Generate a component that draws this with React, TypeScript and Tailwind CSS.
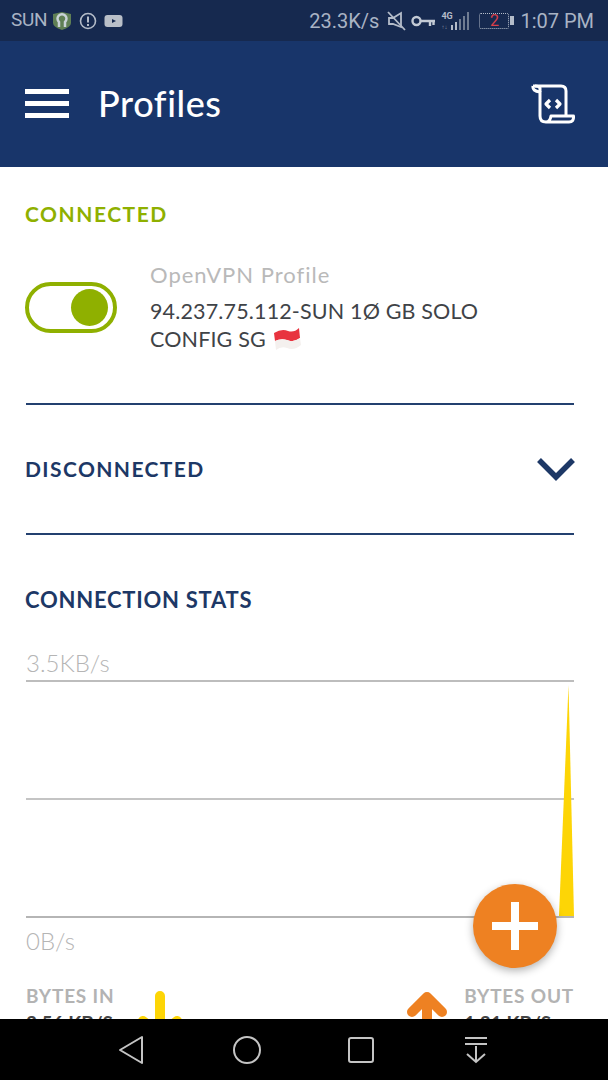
const sans = "font-['Lato','Open_Sans',sans-serif]";

function StatusBar() {
  return (
    <div className="flex h-[41px] shrink-0 items-center justify-between bg-[#16294f] pl-[11px] pr-[14px] font-['Roboto',sans-serif] text-[#a9b3c4]">
      <div className="flex items-center">
        <span className="text-[19px] tracking-[-0.3px]">SUN</span>
        <svg width="20" height="20" viewBox="0 0 20 20" className="ml-[5px]">
          <path d="M1 3 L10 1 L19 3 V12 Q19 16 10 19 Q1 16 1 12 Z" fill="#5f7f55" />
          <path d="M7 16 V11 A4.5 4.5 0 1 1 13 11 V16" fill="none" stroke="#c9d2d8" strokeWidth="2.5" />
        </svg>
        <svg width="18" height="18" viewBox="0 0 18 18" className="ml-[7px]">
          <circle cx="9" cy="9" r="7.5" fill="none" stroke="#b4bcc9" strokeWidth="1.6" />
          <path d="M9 4.5 V10.5 M9 12 V14" stroke="#b4bcc9" strokeWidth="2" />
        </svg>
        <svg width="19" height="14" viewBox="0 0 19 14" className="ml-[7px]">
          <rect x="0.5" y="1" width="18" height="12" rx="3" fill="#b9bfc8" />
          <path d="M8 5 L12 7 L8 9 Z" fill="#16294f" />
        </svg>
      </div>
      <div className="flex items-center">
        <span className="text-[20px]">23.3K/s</span>
        <svg width="19" height="20" viewBox="0 0 19 20" className="ml-[8px]" fill="none" stroke="#b4bcc9" strokeWidth="1.8">
          <path d="M2 7 H6 L14 2 V16 L6 13 H2 Z" />
          <path d="M1 1 L18 19" />
        </svg>
        <svg width="24" height="12" viewBox="0 0 24 12" className="ml-[5px]" fill="none" stroke="#c3cad5" strokeWidth="2.4">
          <circle cx="5.5" cy="6" r="4" />
          <path d="M10 6 H24 M19 6 V11 M22.500 6 V10" />
        </svg>
        <div className="ml-[6px] flex h-[20px] w-[10px] flex-col justify-between">
          <span className="text-[9px] font-bold leading-[10px] text-[#b4bcc9]">4G</span>
          <span className="text-[6px] leading-[8px] text-[#8b96a8]">↑↓</span>
        </div>
        <svg width="19" height="20" viewBox="0 0 19 20">
          <rect x="0" y="14" width="2" height="5" fill="#b4bcc9" />
          <rect x="4" y="11" width="2" height="8" fill="#b4bcc9" />
          <rect x="8" y="8" width="2" height="11" fill="#6f7c92" />
          <rect x="12" y="5" width="2" height="14" fill="#6f7c92" />
          <rect x="16" y="1" width="2" height="18" fill="#6f7c92" />
        </svg>
        <div className="ml-[9px] flex h-[16px] w-[30px] items-center justify-center rounded-[2px] border border-dotted border-[#b4bcc9] text-[16px] leading-none text-[#d8404a]">
          2
        </div>
        <div className="ml-[1px] h-[9px] w-[4px] bg-[#b4bcc9]" />
        <span className="ml-[6px] text-[20px]">1:07 PM</span>
      </div>
    </div>
  );
}

function Header() {
  return (
    <div className="flex h-[126px] shrink-0 items-center justify-between bg-[#18356a] pb-[1px] pl-[25px] pr-[33px]">
      <div className="flex items-center">
        <div className="flex w-[44px] flex-col gap-[7px]">
          <div className="h-[5px] bg-white" />
          <div className="h-[5px] bg-white" />
          <div className="h-[5px] bg-white" />
        </div>
        <h1 className="ml-[29px] mt-[-2px] text-[36px] font-medium leading-none tracking-[0.6px] text-white">Profiles</h1>
      </div>
      <svg width="44" height="40" viewBox="0 0 44 40" fill="none" stroke="white" strokeWidth="3" strokeLinejoin="round">
        <path d="M2 2 H30 Q35 2 35 7 V32" />
        <path d="M2 2 Q1 7 9 8 V32 Q9 38 15 38 H38 Q43 38 42.500 32 H20 Q19 38 15 38" />
        <path d="M9 8 V4 Q8 2 4 2" />
        <path d="M19 16 L15 20 L19 24 M25 16 L29 20 L25 24" strokeWidth="3.200" />
      </svg>
    </div>
  );
}

function Flag() {
  return (
    <svg width="28" height="24" viewBox="0 0 28 24" className="ml-[7px] inline-block align-[-4px]">
      <path d="M1 6 Q9 1 15 4 Q21 6 26 1 L27 11 Q20 16 14 13 Q8 11 2 14 Z" fill="#e8333f" />
      <path d="M2 14 Q8 11 14 13 Q20 16 27 11 L28 18 Q21 24 14 21 Q8 19 3 23 Z" fill="#f4f0ee" />
    </svg>
  );
}

function Chart() {
  return (
    <div className="relative">
      <div className="flex h-[238px] flex-col justify-between">
        <div className="h-[2px] bg-[#bdbdbd]" />
        <div className="h-[2px] bg-[#c4c4c4]" />
        <div className="h-[2px] bg-[#b5b5b5]" />
      </div>
      {/* the traffic spike at the right edge of the graph */}
      <svg width="16" height="232" viewBox="0 0 16 232" className="absolute right-0 top-[5px]">
        <path d="M10.500 0 L16 231 H1 Z" fill="#fdd506" />
      </svg>
    </div>
  );
}

function Bytes() {
  return (
    <div className="mt-[32px] flex items-start justify-between">
      <div className="flex items-start">
        <div className="w-[100px]">
          <div className="text-[19px] font-bold leading-[20px] tracking-[0.8px] text-[#b3b3b3]">BYTES IN</div>
          <div className="mt-[7px] text-[19px] font-bold leading-[20px] text-[#444]">2.56 KB/S</div>
        </div>
        <svg width="44" height="40" viewBox="0 0 44 40" className="ml-[12px] mt-[5px]" fill="none" stroke="#fdd506" strokeWidth="10" strokeLinecap="round">
          <path d="M22 5 V40 M5 30 L22 44 L39 30" />
        </svg>
      </div>
      <div className="flex items-start">
        <svg width="44" height="40" viewBox="0 0 44 40" className="mr-[15px] mt-[5px]" fill="none" stroke="#ee8122" strokeWidth="10" strokeLinecap="round" strokeLinejoin="round">
          <path d="M22 40 V8 M7 21 L22 6 L37 21" />
        </svg>
        <div>
          <div className="text-[19px] font-bold leading-[20px] tracking-[0.8px] text-[#b3b3b3]">BYTES OUT</div>
          <div className="mt-[7px] text-[19px] font-bold leading-[20px] text-[#444]">1.21 KB/S</div>
        </div>
      </div>
    </div>
  );
}

function NavBar() {
  return (
    <div className="flex h-[61px] shrink-0 items-center bg-black pl-[118px] text-[#c4c4c4]">
      <svg width="26" height="30" viewBox="0 0 26 30" fill="none" stroke="currentColor" strokeWidth="2" strokeLinejoin="round">
        <path d="M24 2 V28 L2 15 Z" />
      </svg>
      <svg width="30" height="30" viewBox="0 0 30 30" className="ml-[88px]" fill="none" stroke="currentColor" strokeWidth="2">
        <circle cx="15" cy="15" r="13" />
      </svg>
      <svg width="26" height="26" viewBox="0 0 26 26" className="ml-[86px]" fill="none" stroke="currentColor" strokeWidth="2">
        <rect x="1" y="1" width="24" height="24" rx="2" />
      </svg>
      <svg width="24" height="28" viewBox="0 0 24 28" className="ml-[90px]" fill="none" stroke="currentColor" strokeWidth="2">
        <path d="M1 2 H23 M1 8 H23 M12 10 V26 M3 18 L12 26 L21 18" />
      </svg>
    </div>
  );
}

export default function App() {
  return (
    <div className={`relative flex h-[1080px] w-[608px] flex-col overflow-hidden bg-white ${sans}`}>
      <StatusBar />
      <Header />
      <div className="relative min-h-0 flex-1 overflow-hidden pl-[26px] pr-[34px] pt-[35px]">
        <h2 className="ml-[-1px] text-[21px] font-bold leading-[24px] tracking-[1.5px] text-[#8fb000]">CONNECTED</h2>
        <div className="mt-[36px] flex items-start">
          <div className="ml-[-1px] mt-[20px] flex h-[51px] w-[92px] items-center justify-end rounded-full border-[4px] border-[#8fb000] pr-[5px]">
            <div className="size-[37px] rounded-full bg-[#8fb000]" />
          </div>
          <div className="ml-[33px]">
            <div className="text-[22px] leading-[26px] tracking-[1px] text-[#b9b9b9]">OpenVPN Profile</div>
            <div className="mt-[9px] w-[360px] text-[21.500px] leading-[28px] tracking-[0.15px] text-[#3f4347]">
              94.237.75.112-SUN 1Ø GB SOLO CONFIG SG
              <Flag />
            </div>
          </div>
        </div>
        <div className="mt-[50px] h-[2px] bg-[#23406f]" />
        <div className="flex h-[128px] items-center justify-between">
          <h2 className="ml-[-1px] text-[21px] font-bold leading-[24px] tracking-[1.4px] text-[#1d3866]">DISCONNECTED</h2>
          <svg width="38" height="24" viewBox="0 0 38 24" fill="none" stroke="#1d3866" strokeWidth="5.500" className="mr-[-1px]">
            <path d="M2 3 L19 20 L36 3" />
          </svg>
        </div>
        <div className="h-[2px] bg-[#23406f]" />
        <h2 className="ml-[-1px] mt-[52px] text-[22px] font-bold leading-[26px] tracking-[0.75px] text-[#1d3866]">CONNECTION STATS</h2>
        <div className="mt-[37px] text-[24px] font-light leading-[26px] text-[#b5b5b5]">3.5KB/s</div>
        <div className="mt-[4px]">
          <Chart />
        </div>
        <div className="mt-[10px] text-[24px] font-light leading-[26px] text-[#b5b5b5]">0B/s</div>
        <Bytes />
        <button
          type="button"
          className="absolute left-[473px] top-[717px] flex size-[84px] items-center justify-center rounded-full bg-[#ee8122] shadow-[0_3px_8px_rgba(0,0,0,0.3)]"
        >
          <svg width="46" height="48" viewBox="0 0 46 48" fill="white">
            <rect x="19" y="0" width="8" height="48" />
            <rect x="0" y="20" width="46" height="8" />
          </svg>
        </button>
      </div>
      <NavBar />
    </div>
  );
}
